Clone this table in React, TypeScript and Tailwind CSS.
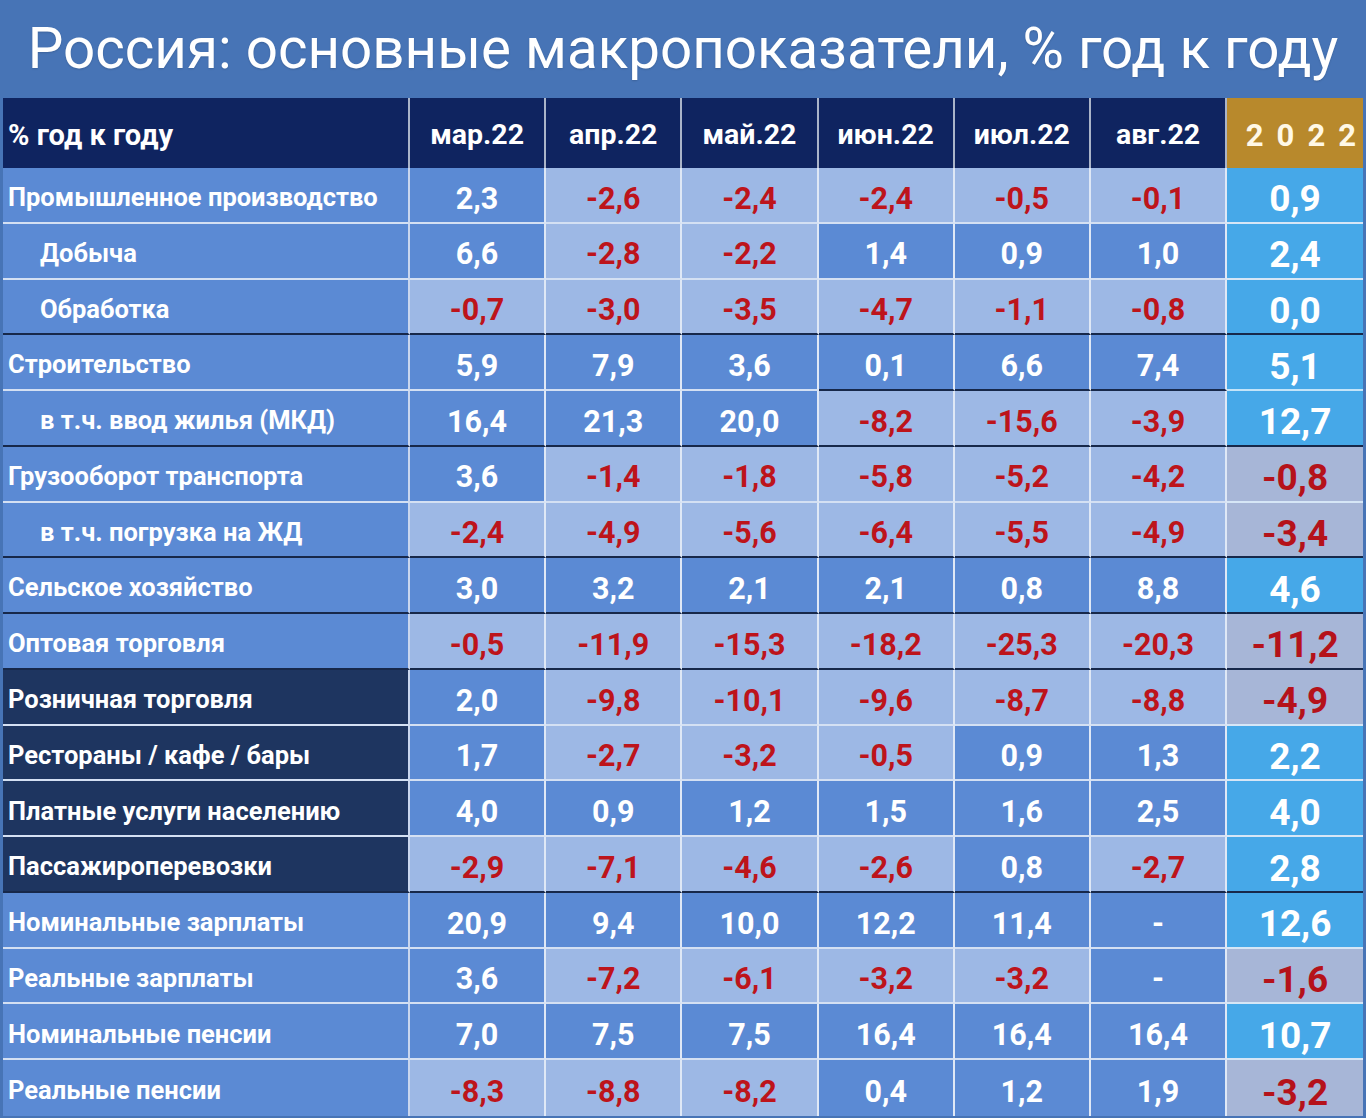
import React from "react";

type Sep = "w" | "d" | "mix" | "none";
type Row = { label: string; indent?: boolean; navy?: boolean; vals: string[]; y: string; sep: Sep };

const months = ["мар.22", "апр.22", "май.22", "июн.22", "июл.22", "авг.22"];

const rows: Row[] = [
  { label: "Промышленное производство", vals: ["2,3", "-2,6", "-2,4", "-2,4", "-0,5", "-0,1"], y: "0,9", sep: "w" },
  { label: "Добыча", indent: true, vals: ["6,6", "-2,8", "-2,2", "1,4", "0,9", "1,0"], y: "2,4", sep: "w" },
  { label: "Обработка", indent: true, vals: ["-0,7", "-3,0", "-3,5", "-4,7", "-1,1", "-0,8"], y: "0,0", sep: "d" },
  { label: "Строительство", vals: ["5,9", "7,9", "3,6", "0,1", "6,6", "7,4"], y: "5,1", sep: "mix" },
  { label: "в т.ч. ввод жилья (МКД)", indent: true, vals: ["16,4", "21,3", "20,0", "-8,2", "-15,6", "-3,9"], y: "12,7", sep: "d" },
  { label: "Грузооборот транспорта", vals: ["3,6", "-1,4", "-1,8", "-5,8", "-5,2", "-4,2"], y: "-0,8", sep: "w" },
  { label: "в т.ч. погрузка на ЖД", indent: true, vals: ["-2,4", "-4,9", "-5,6", "-6,4", "-5,5", "-4,9"], y: "-3,4", sep: "d" },
  { label: "Сельское хозяйство", vals: ["3,0", "3,2", "2,1", "2,1", "0,8", "8,8"], y: "4,6", sep: "d" },
  { label: "Оптовая торговля", vals: ["-0,5", "-11,9", "-15,3", "-18,2", "-25,3", "-20,3"], y: "-11,2", sep: "d" },
  { label: "Розничная торговля", navy: true, vals: ["2,0", "-9,8", "-10,1", "-9,6", "-8,7", "-8,8"], y: "-4,9", sep: "w" },
  { label: "Рестораны / кафе / бары", navy: true, vals: ["1,7", "-2,7", "-3,2", "-0,5", "0,9", "1,3"], y: "2,2", sep: "w" },
  { label: "Платные услуги населению", navy: true, vals: ["4,0", "0,9", "1,2", "1,5", "1,6", "2,5"], y: "4,0", sep: "w" },
  { label: "Пассажироперевозки", navy: true, vals: ["-2,9", "-7,1", "-4,6", "-2,6", "0,8", "-2,7"], y: "2,8", sep: "d" },
  { label: "Номинальные зарплаты", vals: ["20,9", "9,4", "10,0", "12,2", "11,4", "-"], y: "12,6", sep: "w" },
  { label: "Реальные зарплаты", vals: ["3,6", "-7,2", "-6,1", "-3,2", "-3,2", "-"], y: "-1,6", sep: "w" },
  { label: "Номинальные пенсии", vals: ["7,0", "7,5", "7,5", "16,4", "16,4", "16,4"], y: "10,7", sep: "w" },
  { label: "Реальные пенсии", vals: ["-8,3", "-8,8", "-8,2", "0,4", "1,2", "1,9"], y: "-3,2", sep: "none" },
];

const isNeg = (v: string) => v.startsWith("-") && v.length > 1;

function bottomCls(sep: Sep, col: number, isYear: boolean) {
  if (sep === "none") return "border-b-0";
  if (sep === "d") return "border-b-2 border-b-[#17284a]";
  if (sep === "mix") {
    if (isYear) return "border-b-2 border-b-[#c4e4f8]";
    if (col >= 3) return "border-b-2 border-b-[#17284a]";
    return "border-b-2 border-b-[#d4e0f3]";
  }
  if (isYear) return "border-b-2 border-b-[#d6e6f6]";
  return "border-b-2 border-b-[#d4e0f3]";
}

export default function App() {
  return (
    <div className="w-[1366px] h-[1118px] bg-[#4774b6] font-[Roboto,sans-serif] overflow-hidden">
      <div className="h-[98px] flex items-center justify-center">
        <h1 className="text-[56.5px] leading-none text-white font-normal [text-shadow:0_1px_2px_rgba(0,0,0,0.15)]">
          Россия: основные макропоказатели, % год к году
        </h1>
      </div>
      <div className="ml-[3px] w-[1360px] h-[1018px] grid grid-cols-[407px_repeat(6,136.2px)_1fr] grid-rows-[70px_repeat(17,minmax(0,1fr))]">
        <div className="bg-[#0f2460] border-r-2 border-r-[#aab4c8] flex items-center pl-[5px]">
          <span className="text-white font-bold text-[29px] leading-none translate-y-[2px]">% год к году</span>
        </div>
        {months.map((m) => (
          <div key={m} className="bg-[#0f2460] border-r-2 border-r-[#aab4c8] flex items-center justify-center">
            <span className="text-white font-bold text-[28.5px] leading-none translate-y-[2px]">{m}</span>
          </div>
        ))}
        <div className="bg-[#b8892c] flex items-center justify-end pr-[7px]">
          <div className="flex gap-[13px] text-[#fff8e6] font-bold text-[31px] leading-none translate-y-[2px]" aria-label="2022">
            <span>2</span>
            <span>0</span>
            <span>2</span>
            <span>2</span>
          </div>
        </div>

        {rows.map((r, ri) => (
          <React.Fragment key={ri}>
            <div
              className={
                "flex items-center border-r-2 border-r-[#c9d6ee] " +
                (r.navy ? "bg-[#1e3560] " : "bg-[#5b8ad4] ") +
                (r.indent ? "pl-[37px] " : "pl-[5px] ") +
                bottomCls(r.sep, -1, false)
              }
            >
              <span className="text-white font-bold text-[25.5px] leading-none whitespace-nowrap translate-y-[3px]">{r.label}</span>
            </div>
            {r.vals.map((v, ci) => (
              <div
                key={ci}
                className={
                  "flex items-center justify-center border-r-2 border-r-[#dfe8f6] " +
                  (isNeg(v) ? "bg-[#9db8e5] " : "bg-[#5b8ad4] ") +
                  bottomCls(r.sep, ci, false)
                }
              >
                <span
                  className={
                    "font-bold text-[30.5px] leading-none translate-y-[4px] " + (isNeg(v) ? "text-[#bd141b]" : "text-white")
                  }
                >
                  {v}
                </span>
              </div>
            ))}
            <div
              className={
                "flex items-center justify-center " +
                (isNeg(r.y) ? "bg-[#a7b6d7] " : "bg-[#46a8e8] ") +
                bottomCls(r.sep, 6, true)
              }
            >
              <span
                className={
                  "font-bold text-[37px] leading-none translate-y-[4px] " + (isNeg(r.y) ? "text-[#b5121a]" : "text-white")
                }
              >
                {r.y}
              </span>
            </div>
          </React.Fragment>
        ))}
      </div>
    </div>
  );
}
